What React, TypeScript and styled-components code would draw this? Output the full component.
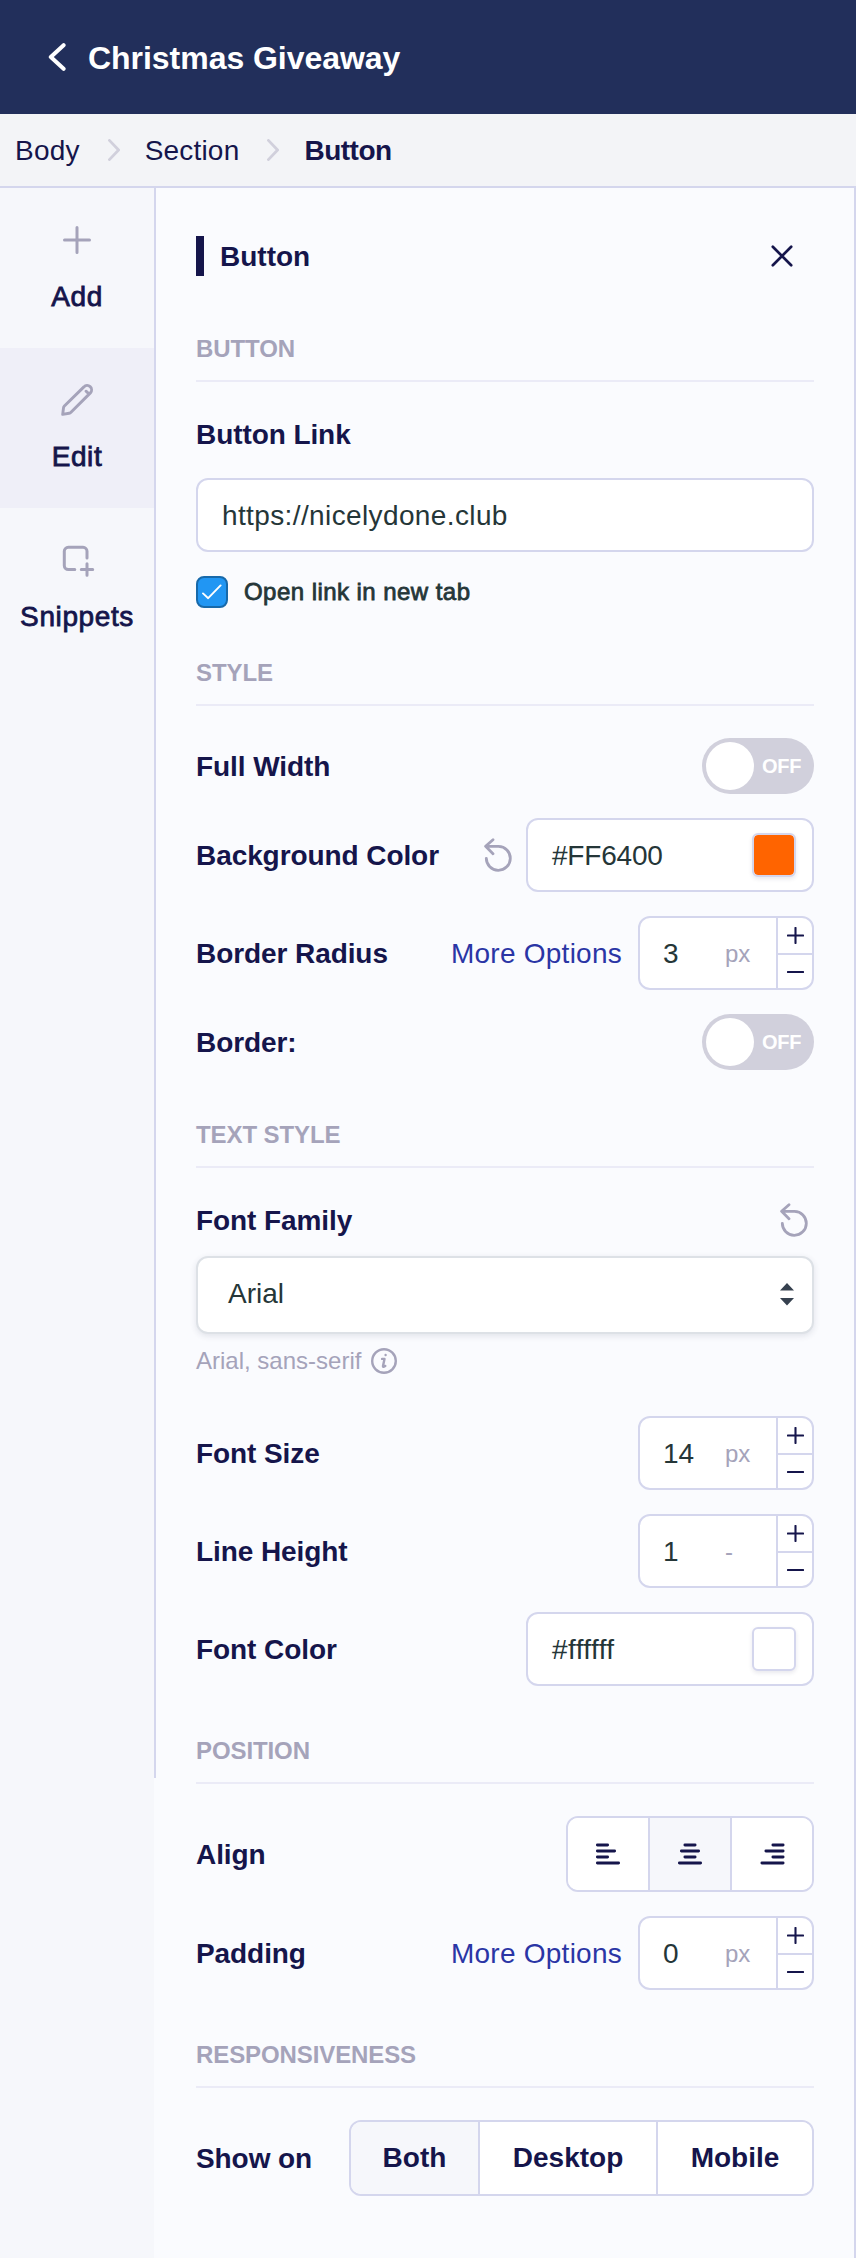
import React from 'react';
import styled, { createGlobalStyle, css } from 'styled-components';

const color = {
  navy: '#222f5b',
  ink: '#15154b',
  text: '#253638',
  muted: '#a5a3ba',
  line: '#d4d6ed',
  rule: '#ebebf7',
  panel: '#fafbfe',
  side: '#f6f7fb',
  link: '#2a35a5',
};

const GlobalStyle = createGlobalStyle`
  *, *::before, *::after { box-sizing: border-box; }
  body {
    margin: 0;
    background: ${color.panel};
    color: ${color.ink};
    font-family: "Liberation Sans", Arial, Helvetica, sans-serif;
    font-size: 28px;
    line-height: 32px;
  }
  button { font: inherit; color: inherit; padding: 0; border: 0; background: none; }
  svg { display: block; flex: none; }
`;

const medium = css`
  -webkit-text-stroke: 0.8px currentColor;
  letter-spacing: 0.45px;
`;

const Page = styled.div`
  display: flex;
  flex-direction: column;
  width: 856px;
  height: 2258px;
`;

const Header = styled.header`
  display: flex;
  align-items: center;
  gap: 21px;
  height: 114px;
  padding: 0 48px;
  background: ${color.navy};
  color: #fff;
`;

const HeaderTitle = styled.h1`
  margin: 0;
  padding-top: 2px;
  font-size: 32px;
  line-height: 40px;
  font-weight: 700;
  letter-spacing: -0.04px;
`;

const Breadcrumb = styled.nav`
  display: flex;
  align-items: center;
  height: 74px;
  padding: 2px 15px 0;
  background: #f3f4f7;
  border-bottom: 2px solid ${color.line};
  letter-spacing: 0.2px;
`;

const Crumb = styled.span<{ $current?: boolean }>`
  ${(p) => p.$current && 'font-weight: 700; letter-spacing: -0.5px;'}
`;

const CrumbArrow = styled.svg`
  margin: -2px 25px 0 28px;
`;

const Main = styled.div`
  display: flex;
  flex: 1;
`;

const Sidebar = styled.aside`
  width: 156px;
  background: linear-gradient(90deg, ${color.side} 154px, ${color.panel} 154px);
`;

const SideNav = styled.nav`
  height: 1590px;
  border-right: 2px solid ${color.line};
`;

const SideItem = styled.button<{ $active?: boolean }>`
  display: flex;
  flex-direction: column;
  align-items: center;
  gap: 23px;
  width: 154px;
  height: 160px;
  padding-top: 34px;
  background: ${(p) => (p.$active ? '#efeff8' : 'transparent')};
  ${medium}
  letter-spacing: 0.6px;

  svg { color: ${color.muted}; }
`;

const Panel = styled.main`
  flex: 1;
  padding: 48px 40px 0;
  border-right: 2px solid ${color.line};
`;

const PanelHead = styled.div`
  display: flex;
  align-items: center;
  justify-content: space-between;
  height: 40px;
  padding-right: 22px;
  margin-bottom: 59px;
`;

const PanelTitle = styled.h2`
  margin: 0;
  height: 40px;
  padding-left: 16px;
  border-left: 8px solid ${color.ink};
  font-size: 28px;
  line-height: 42px;
`;

const Section = styled.section`
  display: flex;
  flex-direction: column;
  margin-bottom: 51px;
`;

const SectionTitle = styled.h3`
  margin: 0;
  padding-bottom: 17px;
  border-bottom: 2px solid ${color.rule};
  color: ${color.muted};
  font-size: 24px;
  line-height: 28px;
  letter-spacing: -0.1px;
`;

const Rows = styled.div`
  display: flex;
  flex-direction: column;
  gap: 24px;
  padding-top: 32px;
`;

const Row = styled.div`
  display: flex;
  align-items: center;
  justify-content: space-between;
`;

const Label = styled.span`
  padding-top: 2px;
  font-weight: 700;
  letter-spacing: -0.08px;
`;

const Controls = styled.div<{ $gap?: number }>`
  display: flex;
  align-items: center;
  gap: ${(p) => p.$gap ?? 16}px;
`;

const FieldHead = styled.div<{ $space: number }>`
  display: flex;
  align-items: center;
  justify-content: space-between;
  height: 56px;
  margin: 24px 0 ${(p) => p.$space}px;
  padding-right: 6px;
`;

const boxed = css`
  border: 2px solid ${color.line};
  border-radius: 12px;
  background: #fff;
`;

const TextInput = styled.div`
  ${boxed}
  display: flex;
  align-items: center;
  height: 74px;
  padding: 2px 24px 0;
  color: ${color.text};
  letter-spacing: 0.38px;
`;

const CheckRow = styled.label`
  display: flex;
  align-items: center;
  gap: 16px;
  height: 32px;
  margin-top: 24px;
  color: ${color.text};
  font-size: 24px;
  line-height: 34px;
  ${medium}
`;

const CheckBox = styled.span`
  display: grid;
  place-items: center;
  width: 32px;
  height: 32px;
  border: 2px solid #1769aa;
  border-radius: 8px;
  background: #2196f3;
`;

const ToggleTrack = styled.button`
  display: flex;
  align-items: center;
  gap: 8px;
  width: 112px;
  height: 56px;
  padding: 0 4px;
  border-radius: 28px;
  background: #d1d0dc;
  color: #fff;
  font-size: 20px;
  font-weight: 700;
  letter-spacing: -0.3px;
`;

const ToggleKnob = styled.span`
  width: 48px;
  height: 48px;
  border-radius: 50%;
  background: #fff;
`;

const ColorInput = styled.div`
  ${boxed}
  display: flex;
  align-items: center;
  justify-content: space-between;
  width: 288px;
  height: 74px;
  padding: 0 16px 0 24px;
  color: ${color.text};
  font-variant-ligatures: none;
`;

const ColorValue = styled.span<{ $spacing: number }>`
  padding-top: 2px;
  letter-spacing: ${(p) => p.$spacing}px;
`;

const Swatch = styled.span<{ $fill: string }>`
  width: 44px;
  height: 44px;
  border: 2px solid ${color.line};
  border-radius: 6px;
  background: ${(p) => p.$fill};
  background-clip: padding-box;
  box-shadow: 0 2px 4px rgba(30, 30, 80, 0.1);
`;

const StepperBox = styled.div`
  ${boxed}
  display: flex;
  width: 176px;
  height: 74px;
  overflow: hidden;
`;

const StepperValue = styled.span`
  display: flex;
  align-items: center;
  width: 85px;
  padding: 2px 0 0 23px;
  color: ${color.text};
`;

const StepperUnit = styled.span`
  display: flex;
  align-items: center;
  flex: 1;
  padding-top: 2px;
  color: ${color.muted};
  font-size: 24px;
`;

const StepperButtons = styled.div`
  display: grid;
  grid-template-rows: 37px 33px;
  width: 36px;
  border-left: 2px solid ${color.line};

  button {
    display: grid;
    place-items: center;
  }
  button:first-child { border-bottom: 2px solid ${color.line}; }
`;

const MoreLink = styled.a`
  padding-top: 2px;
  color: ${color.link};
  letter-spacing: 0.25px;
`;

const Select = styled.div`
  display: flex;
  align-items: center;
  justify-content: space-between;
  height: 78px;
  padding: 0 18px 2px 30px;
  border: 2px solid #dde1e6;
  border-radius: 12px;
  background: #fff;
  box-shadow: 0 2px 6px rgba(40, 50, 80, 0.12);
  color: ${color.text};
`;

const Helper = styled.div`
  display: flex;
  align-items: center;
  gap: 10px;
  height: 54px;
  margin-bottom: -4px;
  color: ${color.muted};
  font-size: 24px;
`;

const Segmented = styled.div`
  ${boxed}
  display: flex;
  height: 76px;
  overflow: hidden;
`;

const Segment = styled.button<{ $width: number; $active?: boolean }>`
  display: grid;
  place-items: center;
  box-sizing: content-box;
  width: ${(p) => p.$width}px;
  background: ${(p) => (p.$active ? color.side : '#fff')};
  font-weight: 700;
  line-height: 34px;

  & + & { border-left: 2px solid ${color.line}; }
`;

const stroke = {
  fill: 'none',
  stroke: 'currentColor',
  strokeLinecap: 'round' as const,
  strokeLinejoin: 'round' as const,
};

const UndoIcon = () => (
  <svg width="28" height="34" viewBox="0 0 28 34" strokeWidth="2.8" {...stroke} color={color.muted}>
    <path d="M9 1.7 1.6 8.3 9 15.8M1.8 8.3H14.5a12 12 0 1 1-12.2 12" />
  </svg>
);

const PlusSmall = () => (
  <svg width="17" height="17" viewBox="0 0 17 17" strokeWidth="2.1" {...stroke}>
    <path d="M8.5 .9v15.2M.9 8.5h15.2" />
  </svg>
);

const MinusSmall = () => (
  <svg width="17" height="4" viewBox="0 0 17 4" strokeWidth="2.1" {...stroke}>
    <path d="M.9 2h15.2" />
  </svg>
);

const alignPaths = {
  left: 'M1.4 3h10.2M1.4 9h17.2M1.4 15h10.2M1.4 21h21.2',
  center: 'M6.9 3h10.2M3.4 9h17.2M6.9 15h10.2M1.4 21h21.2',
  right: 'M12.9 3h10.2M5.9 9h17.2M12.9 15h10.2M1.9 21h21.2',
};

const AlignIcon = ({ side }: { side: keyof typeof alignPaths }) => (
  <svg width="24" height="24" viewBox="0 0 24 24" strokeWidth="2.9" overflow="visible" {...stroke}>
    <path d={alignPaths[side]} />
  </svg>
);

const Toggle = () => (
  <ToggleTrack>
    <ToggleKnob />
    OFF
  </ToggleTrack>
);

const Stepper = ({ value, unit }: { value: string; unit: string }) => (
  <StepperBox>
    <StepperValue>{value}</StepperValue>
    <StepperUnit>{unit}</StepperUnit>
    <StepperButtons>
      <button aria-label="Increase"><PlusSmall /></button>
      <button aria-label="Decrease"><MinusSmall /></button>
    </StepperButtons>
  </StepperBox>
);

const ColorField = ({ value, spacing }: { value: string; spacing: number }) => (
  <ColorInput>
    <ColorValue $spacing={spacing}>{value}</ColorValue>
    <Swatch $fill={value} />
  </ColorInput>
);

const Arrow = () => (
  <CrumbArrow width="12" height="22" viewBox="0 0 12 22" strokeWidth="2.8" {...stroke} color="#d1d0dc">
    <path d="M1.4 1.4 10.6 11 1.4 20.6" />
  </CrumbArrow>
);

export default function App() {
  return (
    <Page>
      <GlobalStyle />
      <Header>
        <svg width="19" height="28" viewBox="0 0 19 28" strokeWidth="4" {...stroke}>
          <path d="M15.6 2.2 2.8 14l12.8 11.8" />
        </svg>
        <HeaderTitle>Christmas Giveaway</HeaderTitle>
      </Header>
      <Breadcrumb>
        <Crumb>Body</Crumb>
        <Arrow />
        <Crumb>Section</Crumb>
        <Arrow />
        <Crumb $current>Button</Crumb>
      </Breadcrumb>
      <Main>
        <Sidebar>
          <SideNav>
            <SideItem>
              <svg width="36" height="36" viewBox="0 0 36 36" strokeWidth="3" {...stroke}>
                <path d="M18 5.5v25M5.5 18h25" />
              </svg>
              Add
            </SideItem>
            <SideItem $active>
              <svg width="36" height="36" viewBox="0 0 36 36" strokeWidth="2.9" {...stroke}>
                <path d="M3.7 32.4l.8-6.6q.1-1 .9-1.8L24.9 4.9a4.4 4.4 0 0 1 6.5 6L12 30.2q-.8.8-1.9 1zM27 9.2l1.9 1.6" />
              </svg>
              Edit
            </SideItem>
            <SideItem>
              <svg width="36" height="36" viewBox="0 0 36 36" strokeWidth="3" {...stroke}>
                <path d="M15.8 27.5H9.3a4 4 0 0 1-4-4V9.3a4 4 0 0 1 4-4H24a4 4 0 0 1 4 4v6.8M28 21.8v11.4M22.3 27.5h11.4" />
              </svg>
              Snippets
            </SideItem>
          </SideNav>
        </Sidebar>
        <Panel>
          <PanelHead>
            <PanelTitle>Button</PanelTitle>
            <svg width="20" height="20" viewBox="0 0 20 20" strokeWidth="2.7" overflow="visible" {...stroke}>
              <path d="M.8.8l18.4 18.4M19.2.8.8 19.2" />
            </svg>
          </PanelHead>

          <Section>
            <SectionTitle>BUTTON</SectionTitle>
            <FieldHead $space={16}>
              <Label>Button Link</Label>
            </FieldHead>
            <TextInput>https://nicelydone.club</TextInput>
            <CheckRow>
              <CheckBox>
                <svg width="20" height="16" viewBox="0 0 20 16" strokeWidth="1.9" {...stroke} color="#fff">
                  <path d="M1 9.4 6.2 14.2 18.6 1.4" />
                </svg>
              </CheckBox>
              Open link in new tab
            </CheckRow>
          </Section>

          <Section>
            <SectionTitle>STYLE</SectionTitle>
            <Rows>
              <Row>
                <Label>Full Width</Label>
                <Toggle />
              </Row>
              <Row>
                <Label>Background Color</Label>
                <Controls $gap={14}>
                  <UndoIcon />
                  <ColorField value="#FF6400" spacing={-0.2} />
                </Controls>
              </Row>
              <Row>
                <Label>Border Radius</Label>
                <Controls>
                  <MoreLink>More Options</MoreLink>
                  <Stepper value="3" unit="px" />
                </Controls>
              </Row>
              <Row>
                <Label>Border:</Label>
                <Toggle />
              </Row>
            </Rows>
          </Section>

          <Section>
            <SectionTitle>TEXT STYLE</SectionTitle>
            <FieldHead $space={8}>
              <Label>Font Family</Label>
              <UndoIcon />
            </FieldHead>
            <Select>
              Arial
              <svg width="14" height="24" viewBox="0 0 14 24" fill="#36414f">
                <path d="M7 1l7 7.4H0zM7 23.4 0 16h14z" />
              </svg>
            </Select>
            <Helper>
              Arial, sans-serif
              <svg width="26" height="26" viewBox="0 0 26 26" strokeWidth="2.4" {...stroke}>
                <circle cx="13" cy="13" r="11.8" />
                <path d="M11.1 10.9h2.4l-1.5 7.2q-.1 1 .9.6l1.4-.8M14.6 7v.1" />
              </svg>
            </Helper>
            <Rows>
              <Row>
                <Label>Font Size</Label>
                <Stepper value="14" unit="px" />
              </Row>
              <Row>
                <Label>Line Height</Label>
                <Stepper value="1" unit="-" />
              </Row>
              <Row>
                <Label>Font Color</Label>
                <ColorField value="#ffffff" spacing={0.4} />
              </Row>
            </Rows>
          </Section>

          <Section>
            <SectionTitle>POSITION</SectionTitle>
            <Rows>
              <Row>
                <Label>Align</Label>
                <Segmented>
                  <Segment $width={80}><AlignIcon side="left" /></Segment>
                  <Segment $width={80} $active><AlignIcon side="center" /></Segment>
                  <Segment $width={80}><AlignIcon side="right" /></Segment>
                </Segmented>
              </Row>
              <Row>
                <Label>Padding</Label>
                <Controls>
                  <MoreLink>More Options</MoreLink>
                  <Stepper value="0" unit="px" />
                </Controls>
              </Row>
            </Rows>
          </Section>

          <Section>
            <SectionTitle>RESPONSIVENESS</SectionTitle>
            <Rows>
              <Row>
                <Label>Show on</Label>
                <Segmented>
                  <Segment $width={127} $active>Both</Segment>
                  <Segment $width={176}>Desktop</Segment>
                  <Segment $width={154}>Mobile</Segment>
                </Segmented>
              </Row>
            </Rows>
          </Section>
        </Panel>
      </Main>
    </Page>
  );
}
